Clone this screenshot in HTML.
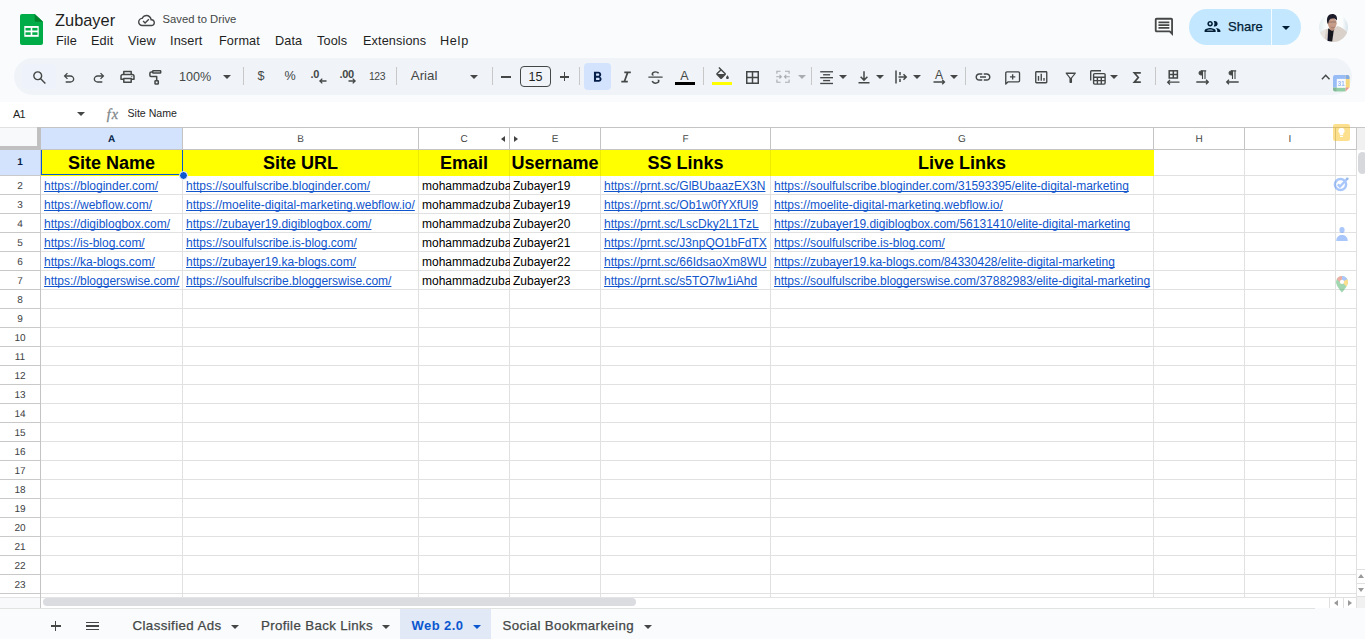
<!DOCTYPE html>
<html>
<head>
<meta charset="utf-8">
<title>Zubayer - Google Sheets</title>
<style>
*{box-sizing:border-box;margin:0;padding:0}
html,body{width:1365px;height:639px;overflow:hidden;background:#f9fbfd;font-family:"Liberation Sans",sans-serif;color:#1f1f1f}
.abs{position:absolute}
#app{position:relative;width:1365px;height:639px;overflow:hidden;background:#f9fbfd}
/* header */
#title{left:55px;top:10px;font-size:16.4px;line-height:20px;color:#1f1f1f;white-space:nowrap}
#saved{left:162.500px;top:12px;font-size:11.250px;line-height:14px;color:#444746;white-space:nowrap}
.menu{top:33px;letter-spacing:0.120px;font-size:12.7px;line-height:16px;color:#1f1f1f;white-space:nowrap}
/* toolbar */
#pill{left:14px;top:58px;width:1338px;height:37px;border-radius:18.500px;background:#f0f4f9}
#pillsearch{left:21.500px;top:64px;width:34.500px;height:24.500px;border-radius:4px;background:#eef2fa}
.tsep{top:67px;width:1px;height:18px;background:#c7c7c7}
.ttext{top:69px;font-size:12.6px;line-height:16px;color:#444746;white-space:nowrap}
svg{position:absolute;overflow:visible}
/* formula bar */
#fbar{left:0;top:102px;width:1365px;height:25px;background:#fff}
/* grid */
#grid{left:0;top:127px;width:1356px;height:470px;background:#fff;overflow:hidden}
.hl{position:absolute;left:0;height:1px;background:#e1e1e1;width:1356px}
.vl{position:absolute;top:0;width:1px;background:#e1e1e1;height:470px}
.ch span{display:inline-block;transform:none}
.ch{position:absolute;top:1px;height:21px;font-size:10px;text-rendering:geometricPrecision;line-height:23px;text-align:center;color:#444746;background:#fff}
.rh{position:absolute;left:0;width:40px;font-size:10px;text-rendering:geometricPrecision;text-align:center;color:#3c4043;background:#fff;line-height:21px;height:18px;overflow:hidden}
.cell{position:absolute;font-size:12px;line-height:20px;height:18px;white-space:nowrap;overflow:hidden;color:#000}
.lnk{color:#1155cc;text-decoration:underline;text-decoration-thickness:1px;text-underline-offset:1px;text-decoration-skip-ink:none}
.hd{position:absolute;top:23px;height:26px;background:#ffff00;font-weight:bold;font-size:18px;line-height:27px;text-align:center;color:#000;white-space:nowrap;overflow:hidden}
/* bottom */
#bottom{left:0;top:609px;width:1365px;height:30px;background:#f9fbfd}
.tab{top:610.800px;height:28px;font-size:12.8px;line-height:30px;color:#444746;white-space:nowrap}
</style>
</head>
<body>
<div id="app">

<!-- ===== HEADER ===== -->
<svg class="abs" style="left:19.500px;top:14px" width="23" height="31" viewBox="0 0 23 31">
  <path d="M2 0H14.700L23 7.800V29a2 2 0 0 1-2 2H2a2 2 0 0 1-2-2V2a2 2 0 0 1 2-2z" fill="#00ac47"/>
  <path d="M14.700 0L23 7.800H16.200a1.500 1.500 0 0 1-1.500-1.500z" fill="#00832d"/>
  <rect x="4.300" y="12" width="14.400" height="10.800" fill="#fff"/>
  <rect x="5.500" y="13.900" width="5.200" height="2.600" fill="#00ac47"/><rect x="12.300" y="13.900" width="5.200" height="2.600" fill="#00ac47"/>
  <rect x="5.500" y="18.300" width="5.200" height="2.600" fill="#00ac47"/><rect x="12.300" y="18.300" width="5.200" height="2.600" fill="#00ac47"/>
</svg>
<div id="title" class="abs">Zubayer</div>
<svg class="abs" style="left:138px;top:12px" width="17" height="17" viewBox="0 0 24 24"><path fill="#444746" d="M19.350 10.040C18.670 6.590 15.640 4 12 4 9.110 4 6.600 5.640 5.350 8.040 2.340 8.360 0 10.910 0 14c0 3.310 2.690 6 6 6h13c2.760 0 5-2.240 5-5 0-2.640-2.050-4.780-4.650-4.960zM19 18H6c-2.210 0-4-1.790-4-4 0-2.050 1.530-3.760 3.560-3.970l1.070-.11.500-.95C8.080 7.140 9.940 6 12 6c2.620 0 4.880 1.860 5.390 4.430l.3 1.500 1.530.11c1.560.1 2.780 1.410 2.780 2.960 0 1.650-1.350 3-3 3zm-9-3.820l-2.090-2.090L6.500 13.500 10 17l6.010-6.010-1.410-1.410z"/></svg>
<div id="saved" class="abs">Saved to Drive</div>

<div class="abs menu" style="left:56px">File</div>
<div class="abs menu" style="left:91px">Edit</div>
<div class="abs menu" style="left:128px">View</div>
<div class="abs menu" style="left:170px">Insert</div>
<div class="abs menu" style="left:219px">Format</div>
<div class="abs menu" style="left:275px">Data</div>
<div class="abs menu" style="left:317px">Tools</div>
<div class="abs menu" style="left:363px">Extensions</div>
<div class="abs menu" style="left:440px;letter-spacing:0.700px">Help</div>

<!-- TOOLBAR -->
<div id="pill" class="abs"></div>
<div id="pillsearch" class="abs"></div>
<!--TOOLBAR-ICONS-->
<svg style="left:30.700000000000003px;top:68.9px" width="17" height="17" viewBox="0 -960 960 960"><path fill="#444746" d="M784-120 532-372q-30 24-69 38t-83 14q-109 0-184.500-75.500T120-580q0-109 75.500-184.500T380-840q109 0 184.500 75.500T640-580q0 44-14 83t-38 69l252 252-56 56ZM380-400q75 0 127.500-52.500T560-580q0-75-52.500-127.500T380-760q-75 0-127.500 52.500T200-580q0 75 52.500 127.500T380-400Z"/></svg>
<svg style="left:60.8px;top:70.0px" width="16" height="16" viewBox="0 -960 960 960"><path fill="#444746" d="M280-200v-80h284q63 0 109.500-40T720-420q0-60-46.500-100T564-560H312l104 104-56 56-200-200 200-200 56 56-104 104h252q97 0 166.500 63T800-420q0 94-69.500 157T564-200H280Z"/></svg>
<svg style="left:90.6px;top:70.0px" width="16" height="16" viewBox="0 -960 960 960"><path fill="#444746" d="M396-200q-97 0-166.500-63T160-420q0-94 69.500-157T396-640h252L544-744l56-56 200 200-200 200-56-56 104-104H396q-63 0-109.500 40T240-420q0 60 46.500 100T396-280h284v80H396Z"/></svg>
<svg style="left:120px;top:70px" width="15" height="13" viewBox="0 0 15 13" fill="none" stroke="#444746" stroke-width="1.500" stroke-linejoin="round"><path d="M3.800 4.400V1.400h7.400v3"/><path d="M3.800 9.300H1V6.200a1.800 1.800 0 0 1 1.800-1.800h9.400a1.800 1.800 0 0 1 1.800 1.800v3.100h-2.800"/><rect x="3.800" y="8.600" width="7.400" height="3.600"/><circle cx="11.800" cy="6.500" r="0.350" fill="#444746" stroke-width="0.600"/></svg>
<svg style="left:148px;top:69px" width="15" height="17" viewBox="0 0 15 17" fill="none" stroke="#444746" stroke-width="1.500" stroke-linejoin="round"><rect x="4.700" y="1.700" width="8" height="2.400" rx="0.500"/><path d="M4.700 2.900H3.300a1.400 1.400 0 0 0-1.400 1.400v2.200a1 1 0 0 0 1 1h5.800v3.600"/><rect x="7" y="11.700" width="3.300" height="3.400" rx="0.600"/></svg>
<div class="abs ttext" style="left:179px;top:69px">100%</div>
<svg style="left:223px;top:75px" width="8" height="4" viewBox="0 0 8 4"><path d="M0 0h8L4 4z" fill="#444746"/></svg>
<div class="abs tsep" style="left:243px"></div>
<div class="abs ttext" style="left:257.500px;top:68.400px">$</div>
<div class="abs ttext" style="left:284.500px;top:68.400px">%</div>
<div class="abs ttext" style="left:310.500px;top:65.500px;font-size:11px;font-weight:bold;letter-spacing:-0.3px">.0</div>
<svg style="left:318.500px;top:77.700px" width="8" height="6" viewBox="0 0 8 6" fill="none" stroke="#444746" stroke-width="1.300"><path d="M7.500 3H1M3.300 0.600L0.900 3l2.400 2.400"/></svg>
<div class="abs ttext" style="left:339.500px;top:65.500px;font-size:11px;font-weight:bold;letter-spacing:-0.3px">.00</div>
<svg style="left:348px;top:77.700px" width="8" height="6" viewBox="0 0 8 6" fill="none" stroke="#444746" stroke-width="1.300"><path d="M0.500 3H7M4.700 0.600L7.100 3 4.700 5.400"/></svg>
<div class="abs ttext" style="left:368.900px;top:68.800px;font-size:10.400px;letter-spacing:-0.3px">123</div>
<div class="abs tsep" style="left:396px"></div>
<div class="abs ttext" style="left:410.800px;top:68.200px;font-size:13.300px">Arial</div>
<svg style="left:470px;top:75px" width="8" height="4" viewBox="0 0 8 4"><path d="M0 0h8L4 4z" fill="#444746"/></svg>
<div class="abs tsep" style="left:492px"></div>
<div class="abs" style="left:501px;top:76px;width:10px;height:1.500px;background:#444746"></div>
<div class="abs" style="left:520px;top:66px;width:31px;height:21px;border:1px solid #444746;border-radius:4px"></div>
<div class="abs ttext" style="left:520px;top:69px;width:31px;text-align:center;color:#1f1f1f">15</div>
<div class="abs" style="left:560px;top:76px;width:9px;height:1.500px;background:#444746"></div>
<div class="abs" style="left:563.700px;top:72.200px;width:1.500px;height:9px;background:#444746"></div>
<div class="abs tsep" style="left:579px"></div>
<div class="abs" style="left:584px;top:63px;width:27px;height:27px;border-radius:4px;background:#d3e3fd"></div>
<svg style="left:588.5px;top:68.7px" width="17" height="17" viewBox="0 0 24 24"><path fill="#041e49" d="M15.600 10.790c.97-.67 1.650-1.770 1.650-2.790 0-2.260-1.750-4-4-4H7v14h7.040c2.090 0 3.710-1.700 3.710-3.790 0-1.520-.860-2.820-2.150-3.420zM10 6.500h3c.83 0 1.500.67 1.500 1.500s-.67 1.500-1.500 1.500h-3v-3zm3.500 9H10v-3h3.500c.83 0 1.500.67 1.500 1.500s-.67 1.500-1.500 1.500z"/></svg>
<svg style="left:620px;top:71px" width="12" height="12" viewBox="0 0 12 12" fill="none" stroke="#444746" stroke-width="1.700"><path d="M4.300 1.400h6.500M1.300 10.700h6.500M7.700 1.400L4.300 10.700"/></svg>
<svg style="left:646px;top:68.700px" width="19" height="17" viewBox="0 0 24 24" preserveAspectRatio="none"><path fill="#444746" d="M3 12.500v-1.800h18v1.800zM7.600 9.200q-.3-.5-.45-1.050T7 7q0-1.750 1.400-2.880Q9.800 3 12 3q1.650 0 2.900.72 1.250.73 1.750 1.980l-1.900.85q-.3-.7-1.050-1.130Q12.950 5 12 5q-1.300 0-2.100.55Q9.100 6.100 9.100 7q0 .6.330 1.150.32.550.87 1.050zM12.050 21q-1.800 0-3.200-.97-1.400-.98-1.900-2.630l1.950-.75q.4 1.100 1.250 1.730.85.620 1.950.620 1.250 0 2.070-.6.830-.6.830-1.600 0-.5-.2-.95-.2-.45-.55-.85h2.450q.2.400.3.850.1.450.1.950 0 1.950-1.400 3.080Q14.300 21 12.050 21z"/></svg>
<div class="abs ttext" style="left:679.500px;top:67.600px;font-size:12.500px;width:10px;text-align:center">A</div>
<div class="abs" style="left:675px;top:82px;width:20px;height:3px;background:#000"></div>
<div class="abs tsep" style="left:703px"></div>
<svg style="left:714.0px;top:67.0px" width="17" height="17" viewBox="0 0 24 24"><path fill="#444746" d="M16.560 8.940L7.620 0 6.210 1.410l2.380 2.380-5.150 5.150c-.59.59-.59 1.540 0 2.120l5.500 5.500c.29.29.68.44 1.060.44s.77-.15 1.060-.44l5.500-5.500c.59-.58.59-1.530 0-2.120zM5.210 10L10 5.210 14.790 10H5.210zM19 11.500s-2 2.170-2 3.500c0 1.100.9 2 2 2s2-.9 2-2c0-1.330-2-3.500-2-3.500z"/></svg>
<div class="abs" style="left:712px;top:82px;width:20px;height:3px;background:#ffff00"></div>
<svg style="left:746px;top:71px" width="13" height="13" viewBox="0 0 13 13" fill="none" stroke="#444746" stroke-width="1.500"><rect x="0.750" y="0.750" width="11.500" height="11.500"/><path d="M6.500 0.750v11.500M0.750 6.500h11.500"/></svg>
<svg style="left:776px;top:70px" width="14" height="14" viewBox="0 0 14 14" fill="none" stroke="#a9adb1" stroke-width="1.150"><path d="M4.600 1.200H0.900V3.800M0.900 9.600V12.200H4.600M9 1.200H13.100V3.800M13.100 9.600V12.200H9M0.200 6.700H5.200M3.500 4.900L5.300 6.700 3.500 8.500M13.800 6.700H8.600M10.300 4.900L8.500 6.700l1.800 1.800"/></svg>
<svg style="left:798px;top:75px" width="8" height="4" viewBox="0 0 8 4"><path d="M0 0h8L4 4z" fill="#a9adb1"/></svg>
<div class="abs tsep" style="left:811px"></div>
<svg style="left:820px;top:71px" width="13" height="14" viewBox="0 0 13 14" fill="#444746"><rect x="0.200" y="0.100" width="12.800" height="1.350"/><rect x="3.100" y="3.100" width="7" height="1.350"/><rect x="0.200" y="6" width="12.800" height="1.350"/><rect x="3.100" y="8.900" width="7" height="1.350"/><rect x="0.200" y="11.800" width="12.800" height="1.350"/></svg>
<svg style="left:839px;top:75px" width="8" height="4" viewBox="0 0 8 4"><path d="M0 0h8L4 4z" fill="#444746"/></svg>
<svg style="left:858px;top:70px" width="12" height="14" viewBox="0 0 12 14" fill="none" stroke="#444746" stroke-width="1.500"><path d="M6 1.300v8.800M2.600 6.700l3.400 3.400 3.400-3.400M0.500 12.800h11"/></svg>
<svg style="left:876px;top:75px" width="8" height="4" viewBox="0 0 8 4"><path d="M0 0h8L4 4z" fill="#444746"/></svg>
<svg style="left:895px;top:70px" width="13" height="14" viewBox="0 0 13 14" fill="none" stroke="#444746" stroke-width="1.500"><path d="M1 0.500v13M5 2v3.200M5 8.800V12M3.500 7H11M8.500 4.300L11.200 7 8.500 9.700"/></svg>
<svg style="left:913px;top:75px" width="8" height="4" viewBox="0 0 8 4"><path d="M0 0h8L4 4z" fill="#444746"/></svg>
<div class="abs ttext" style="left:934px;top:66.500px;font-size:12px;width:10px;text-align:center">A</div>
<svg style="left:933px;top:78.700px" width="13" height="6" viewBox="0 0 13 6" fill="none" stroke="#444746" stroke-width="1.300"><path d="M0.500 3H11.500M9.200 0.700L11.500 3 9.200 5.300"/></svg>
<svg style="left:950px;top:75px" width="8" height="4" viewBox="0 0 8 4"><path d="M0 0h8L4 4z" fill="#444746"/></svg>
<div class="abs tsep" style="left:965px"></div>
<svg style="left:974.3px;top:68.3px" width="18" height="18" viewBox="0 0 24 24"><path fill="#444746" d="M3.900 12c0-1.710 1.390-3.100 3.100-3.100h4V7H7c-2.760 0-5 2.240-5 5s2.240 5 5 5h4v-1.900H7c-1.710 0-3.100-1.390-3.100-3.100zM8 13h8v-2H8v2zm9-6h-4v1.900h4c1.710 0 3.100 1.390 3.100 3.100s-1.390 3.100-3.100 3.100h-4V17h4c2.760 0 5-2.240 5-5s-2.240-5-5-5z"/></svg>
<svg style="left:1004.500px;top:70.500px" width="15.300" height="14.600" viewBox="0 0 16 15" fill="none" stroke="#444746" stroke-width="1.400" stroke-linejoin="round"><path d="M0.800 13.600V2a1.200 1.200 0 0 1 1.200-1.200h12a1.200 1.200 0 0 1 1.200 1.200v8a1.200 1.200 0 0 1-1.200 1.200H3.300z"/><path d="M8 3.200v5.600M5.200 6h5.600"/></svg>
<svg style="left:1032.75px;top:69.15px" width="16.5" height="16.5" viewBox="0 0 24 24"><path fill="#444746" d="M9 17H7v-7h2v7zm4 0h-2V7h2v10zm4 0h-2v-4h2v4zm2 2H5V5h14v14zm0-16H5c-1.100 0-2 .9-2 2v14c0 1.100.9 2 2 2h14c1.100 0 2-.9 2-2V5c0-1.100-.9-2-2-2z"/></svg>
<svg style="left:1062.95px;top:70.45px" width="15.5" height="15.5" viewBox="0 0 24 24"><path fill="#444746" d="M7 6h10l-5.010 6.300L7 6zm-2.750-.39C6.270 8.200 10 13 10 13v6c0 .55.45 1 1 1h2c.55 0 1-.45 1-1v-6s3.720-4.800 5.740-7.390c.51-.66.040-1.610-.79-1.610H5.040c-.83 0-1.300.95-.79 1.610z"/></svg>
<svg style="left:1090px;top:70px" width="16" height="15" viewBox="0 0 16 15" fill="none" stroke="#444746" stroke-width="1.400"><path d="M0.700 10.500V1.500a.8.800 0 0 1 .8-.8H11"/><rect x="3.600" y="3.600" width="11.500" height="10.500" rx="1"/><path d="M3.600 7.200h11.500M3.600 10.600h11.500M7.400 7.200v6.900M11.300 7.200v6.900"/></svg>
<svg style="left:1110px;top:75px" width="8" height="4" viewBox="0 0 8 4"><path d="M0 0h8L4 4z" fill="#444746"/></svg>
<svg style="left:1131.500px;top:71px" width="10" height="13" viewBox="0 0 10 13" fill="none" stroke="#444746" stroke-width="1.700" stroke-linejoin="miter"><path d="M8.800 1.800H2.300L6.300 6.500 2.300 11.200H8.800"/></svg>
<div class="abs tsep" style="left:1155px"></div>
<svg style="left:1167px;top:70px" width="13" height="15" viewBox="0 0 13 15" fill="none" stroke="#444746" stroke-width="1.300"><rect x="2.200" y="0.800" width="8.200" height="7.200" stroke-width="1.500"/><path d="M6.300 0.800v7.200M2.200 4.400h8.200" stroke-width="1.500"/><path d="M12.500 12.200H0.700M3 9.900L0.700 12.200 3 14.500"/></svg>
<svg style="left:1196px;top:70px" width="13" height="15" viewBox="0 0 13 15" fill="none" stroke="#444746" stroke-width="1.300"><path d="M6.500 0.900v8M9 0.900v8M10.200 0.900H5" stroke-width="1.100"/><path d="M5 0.900a2.100 2.100 0 0 0 0 4.200h1.500V0.900z" fill="#444746" stroke-width="0.800"/><path d="M0.300 12H12.300M10 9.700l2.300 2.300L10 14.300"/></svg>
<svg style="left:1225.500px;top:70px" width="13" height="15" viewBox="0 0 13 15" fill="none" stroke="#444746" stroke-width="1.300"><path d="M6.500 0.900v8M9 0.900v8M10.200 0.900H5" stroke-width="1.100"/><path d="M5 0.900a2.100 2.100 0 0 0 0 4.200h1.500V0.900z" fill="#444746" stroke-width="0.800"/><path d="M12.700 12H0.700M3 9.700L0.700 12 3 14.300"/></svg>
<svg style="left:1320.800px;top:74.200px" width="9.400" height="6.200" viewBox="0 0 10 7" fill="none" stroke="#444746" stroke-width="1.600"><path d="M0.700 6L5 1.500 9.300 6"/></svg>
<!--/TOOLBAR-ICONS-->

<!-- FORMULA BAR -->
<div id="fbar" class="abs"></div>
<!--FBAR-->
<div class="abs" style="left:13px;top:106px;font-size:11px;line-height:16px;color:#1f1f1f;letter-spacing:-0.900px">A1</div>
<svg style="left:77px;top:112px" width="8" height="4" viewBox="0 0 8 4"><path d="M0 0h8L4 4z" fill="#444746"/></svg>
<div class="abs" style="left:106.700px;top:104px;font-family:'Liberation Serif',serif;font-style:italic;font-size:14.200px;line-height:20px;color:#80868b;letter-spacing:1.100px;-webkit-text-stroke:0.300px #80868b">fx</div>
<div class="abs" style="left:127.500px;top:106px;font-size:10.600px;line-height:14px;color:#1f1f1f;white-space:nowrap">Site Name</div>
<svg style="left:1153px;top:16.300px" width="21.800" height="21.800" viewBox="0 0 24 24"><path fill="#444746" d="M21.990 4c0-1.100-.89-2-1.990-2H4c-1.100 0-2 .9-2 2v12c0 1.100.9 2 2 2h14l4 4-.01-18zM20 4v13.170L18.830 16H4V4h16zM6 12h12v2H6zm0-3h12v2H6zm0-3h12v2H6z"/></svg>
<div class="abs" style="left:1189px;top:9px;width:112px;height:36px;border-radius:18px;background:#c2e7ff"></div>
<div class="abs" style="left:1271px;top:9px;width:1px;height:36px;background:#f6fbff"></div>
<svg style="left:1203px;top:17px" width="19" height="19" viewBox="0 0 24 24"><path fill="#001d35" d="M9 13.750c-2.340 0-7 1.170-7 3.500V19h14v-1.750c0-2.330-4.660-3.500-7-3.500zM4.340 17c.84-.58 2.870-1.250 4.660-1.250s3.820.67 4.660 1.250H4.340zM9 12c1.930 0 3.500-1.570 3.500-3.500S10.930 5 9 5 5.500 6.570 5.500 8.500 7.070 12 9 12zm0-5c.83 0 1.500.67 1.500 1.500S9.830 10 9 10s-1.500-.67-1.500-1.500S8.170 7 9 7zm7.040 6.810c1.160.84 1.960 1.960 1.960 3.440V19h4v-1.750c0-2.020-3.500-3.170-5.960-3.440zM15 12c1.930 0 3.500-1.570 3.500-3.500S16.930 5 15 5c-.54 0-1.040.13-1.500.35.63.89 1 1.980 1 3.150s-.37 2.260-1 3.150c.46.22.96.350 1.500.350z"/></svg>
<div class="abs" style="left:1228px;top:18px;font-size:13px;line-height:18px;color:#001d35;white-space:nowrap;-webkit-text-stroke:0.25px #001d35">Share</div>
<svg style="left:1282px;top:25.500px" width="8" height="4" viewBox="0 0 8 4"><path d="M0 0h8L4 4z" fill="#001d35"/></svg>
<svg style="left:1319px;top:12.500px" width="29" height="29" viewBox="0 0 29 29"><defs><clipPath id="av"><circle cx="14.500" cy="14.500" r="14.400"/></clipPath><filter id="bl" x="-20%" y="-20%" width="140%" height="140%"><feGaussianBlur stdDeviation="0.550"/></filter><linearGradient id="avbg" x1="0" x2="1" y1="0" y2="0"><stop offset="0" stop-color="#e3edf0"/><stop offset="0.250" stop-color="#fbfdfd"/><stop offset="0.800" stop-color="#fbfdfd"/><stop offset="1" stop-color="#d5e2ea"/></linearGradient></defs><g clip-path="url(#av)"><rect width="29" height="29" fill="url(#avbg)"/><g filter="url(#bl)"><path d="M0 29V22c1.500-3 5-5.500 9.500-6.500l4 1.500 4.800-4c4 1 8.200 3.500 10.700 7.500V29z" fill="#dad1cb"/><path d="M0 29V22c1.500-3 4-5 7-6l-2 13z" fill="#e9e4e1"/><path d="M9.200 15.500l5.600 1.500-1.600 11.500h-4.300z" fill="#16161f"/><path d="M9.200 15.500l.7 12.500-1.400.2z" fill="#0d0d33"/><path d="M10.500 13h5v4l-2.500 1-2.500-1.500z" fill="#b98f7d"/><ellipse cx="13.200" cy="10.300" rx="4.500" ry="5.500" fill="#c79d8a"/><path d="M8.300 10c-1.300-5.800 1.400-9 4.900-9s5.600 2.700 4.600 6.600c-.9-1.700-2.200-2.300-4.500-2.100-2.400.2-3.400 1.500-3.800 4.300-.2 1.400-.8 1.200-1.200.2z" fill="#1e1e2b"/><path d="M9.800 9h7.200" stroke="#80665e" stroke-width="0.700" fill="none"/><path d="M10.800 13c1 1.900 2 2.400 3 2.400s2-.5 2.800-2.200c-.8.600-1.700.8-2.800.8s-2.200-.3-3-1z" fill="#ad8272"/></g></g></svg>
<!--/FBAR-->

<!-- GRID -->
<div id="grid" class="abs">
<!--GRID-->
<div class="hl" style="top:0px"></div>
<div class="hl" style="top:22px"></div>
<div class="hl" style="top:48px"></div>
<div class="hl" style="top:67px"></div>
<div class="hl" style="top:86px"></div>
<div class="hl" style="top:105px"></div>
<div class="hl" style="top:124px"></div>
<div class="hl" style="top:143px"></div>
<div class="hl" style="top:162px"></div>
<div class="hl" style="top:181px"></div>
<div class="hl" style="top:200px"></div>
<div class="hl" style="top:219px"></div>
<div class="hl" style="top:238px"></div>
<div class="hl" style="top:257px"></div>
<div class="hl" style="top:276px"></div>
<div class="hl" style="top:295px"></div>
<div class="hl" style="top:314px"></div>
<div class="hl" style="top:333px"></div>
<div class="hl" style="top:352px"></div>
<div class="hl" style="top:371px"></div>
<div class="hl" style="top:390px"></div>
<div class="hl" style="top:409px"></div>
<div class="hl" style="top:428px"></div>
<div class="hl" style="top:447px"></div>
<div class="hl" style="top:466px"></div>
<div class="vl" style="left:182px"></div>
<div class="vl" style="left:418px"></div>
<div class="vl" style="left:509px"></div>
<div class="vl" style="left:600px"></div>
<div class="vl" style="left:770px"></div>
<div class="vl" style="left:1153px"></div>
<div class="vl" style="left:1244px"></div>
<div class="vl" style="left:1335px"></div>
<div class="ch" style="left:41px;width:141px;background:#d3e3fd;color:#041e49;font-weight:bold;"><span>A</span></div>
<div class="ch" style="left:183px;width:235px;"><span>B</span></div>
<div class="ch" style="left:419px;width:90px;"><span>C</span></div>
<div class="ch" style="left:510px;width:90px;"><span>E</span></div>
<div class="ch" style="left:601px;width:169px;"><span>F</span></div>
<div class="ch" style="left:771px;width:382px;"><span>G</span></div>
<div class="ch" style="left:1154px;width:90px;"><span>H</span></div>
<div class="ch" style="left:1245px;width:90px;"><span>I</span></div>
<div class="abs" style="left:0;top:1px;width:37px;height:18px;background:#f8f9fa"></div>
<div class="abs" style="left:37px;top:0px;width:4px;height:23px;background:#c0c0c0"></div>
<div class="abs" style="left:0px;top:19px;width:41px;height:4px;background:#c0c0c0"></div>
<div class="abs" style="left:40px;top:23px;width:1px;height:447px;background:#c4c4c4"></div>
<div class="abs" style="left:41px;top:0;width:1315px;height:1px;background:#c4c4c4"></div>
<div class="abs" style="left:41px;top:22px;width:1315px;height:1px;background:#c4c4c4"></div>
<div class="abs" style="left:182px;top:0;width:1px;height:23px;background:#c4c4c4"></div>
<div class="abs" style="left:418px;top:0;width:1px;height:23px;background:#c4c4c4"></div>
<div class="abs" style="left:509px;top:0;width:1px;height:23px;background:#c4c4c4"></div>
<div class="abs" style="left:600px;top:0;width:1px;height:23px;background:#c4c4c4"></div>
<div class="abs" style="left:770px;top:0;width:1px;height:23px;background:#c4c4c4"></div>
<div class="abs" style="left:1153px;top:0;width:1px;height:23px;background:#c4c4c4"></div>
<div class="abs" style="left:1244px;top:0;width:1px;height:23px;background:#c4c4c4"></div>
<div class="abs" style="left:1335px;top:0;width:1px;height:23px;background:#c4c4c4"></div>
<svg style="left:501px;top:9px" width="4" height="6" viewBox="0 0 4 6"><path d="M4 0v6L0 3z" fill="#444"/></svg>
<svg style="left:514px;top:9px" width="4" height="6" viewBox="0 0 4 6"><path d="M0 0v6l4-3z" fill="#444"/></svg>
<div class="rh" style="top:23px;height:25px;line-height:25px;background:#d3e3fd;color:#041e49;font-weight:bold">1</div>
<div class="rh" style="top:49px">2</div>
<div class="rh" style="top:68px">3</div>
<div class="rh" style="top:87px">4</div>
<div class="rh" style="top:106px">5</div>
<div class="rh" style="top:125px">6</div>
<div class="rh" style="top:144px">7</div>
<div class="rh" style="top:163px">8</div>
<div class="rh" style="top:182px">9</div>
<div class="rh" style="top:201px">10</div>
<div class="rh" style="top:220px">11</div>
<div class="rh" style="top:239px">12</div>
<div class="rh" style="top:258px">13</div>
<div class="rh" style="top:277px">14</div>
<div class="rh" style="top:296px">15</div>
<div class="rh" style="top:315px">16</div>
<div class="rh" style="top:334px">17</div>
<div class="rh" style="top:353px">18</div>
<div class="rh" style="top:372px">19</div>
<div class="rh" style="top:391px">20</div>
<div class="rh" style="top:410px">21</div>
<div class="rh" style="top:429px">22</div>
<div class="rh" style="top:448px">23</div>
<div class="rh" style="top:467px">24</div>
<div class="abs" style="left:0;top:48px;width:40px;height:1px;background:#c9c9c9"></div>
<div class="abs" style="left:0;top:67px;width:40px;height:1px;background:#c9c9c9"></div>
<div class="abs" style="left:0;top:86px;width:40px;height:1px;background:#c9c9c9"></div>
<div class="abs" style="left:0;top:105px;width:40px;height:1px;background:#c9c9c9"></div>
<div class="abs" style="left:0;top:124px;width:40px;height:1px;background:#c9c9c9"></div>
<div class="abs" style="left:0;top:143px;width:40px;height:1px;background:#c9c9c9"></div>
<div class="abs" style="left:0;top:162px;width:40px;height:1px;background:#c9c9c9"></div>
<div class="abs" style="left:0;top:181px;width:40px;height:1px;background:#c9c9c9"></div>
<div class="abs" style="left:0;top:200px;width:40px;height:1px;background:#c9c9c9"></div>
<div class="abs" style="left:0;top:219px;width:40px;height:1px;background:#c9c9c9"></div>
<div class="abs" style="left:0;top:238px;width:40px;height:1px;background:#c9c9c9"></div>
<div class="abs" style="left:0;top:257px;width:40px;height:1px;background:#c9c9c9"></div>
<div class="abs" style="left:0;top:276px;width:40px;height:1px;background:#c9c9c9"></div>
<div class="abs" style="left:0;top:295px;width:40px;height:1px;background:#c9c9c9"></div>
<div class="abs" style="left:0;top:314px;width:40px;height:1px;background:#c9c9c9"></div>
<div class="abs" style="left:0;top:333px;width:40px;height:1px;background:#c9c9c9"></div>
<div class="abs" style="left:0;top:352px;width:40px;height:1px;background:#c9c9c9"></div>
<div class="abs" style="left:0;top:371px;width:40px;height:1px;background:#c9c9c9"></div>
<div class="abs" style="left:0;top:390px;width:40px;height:1px;background:#c9c9c9"></div>
<div class="abs" style="left:0;top:409px;width:40px;height:1px;background:#c9c9c9"></div>
<div class="abs" style="left:0;top:428px;width:40px;height:1px;background:#c9c9c9"></div>
<div class="abs" style="left:0;top:447px;width:40px;height:1px;background:#c9c9c9"></div>
<div class="abs" style="left:0;top:466px;width:40px;height:1px;background:#c9c9c9"></div>
<div class="hd" style="left:41px;width:142px"><div style="width:141px">Site Name</div></div>
<div class="hd" style="left:183px;width:236px"><div style="width:235px">Site URL</div></div>
<div class="hd" style="left:419px;width:91px"><div style="width:90px">Email</div></div>
<div class="hd" style="left:510px;width:91px"><div style="width:90px">Username</div></div>
<div class="hd" style="left:601px;width:170px"><div style="width:169px">SS Links</div></div>
<div class="hd" style="left:771px;width:383px"><div style="width:382px">Live Links</div></div>
<div class="abs" style="left:418px;top:23px;width:1px;height:26px;background:#ecec00"></div>
<div class="abs" style="left:509px;top:23px;width:1px;height:26px;background:#ecec00"></div>
<div class="abs" style="left:600px;top:23px;width:1px;height:26px;background:#ecec00"></div>
<div class="abs" style="left:770px;top:23px;width:1px;height:26px;background:#ecec00"></div>
<div class="cell" style="left:44px;top:49px;width:138px"><span class="lnk">https://bloginder.com/</span></div>
<div class="cell" style="left:186px;top:49px;width:232px"><span class="lnk">https://soulfulscribe.bloginder.com/</span></div>
<div class="cell" style="left:422px;top:49px;width:88px">mohammadzubayer@gmail.com</div>
<div class="cell" style="left:513px;top:49px;width:87px">Zubayer19</div>
<div class="cell" style="left:604px;top:49px;width:166px"><span class="lnk">https://prnt.sc/GlBUbaazEX3N</span></div>
<div class="cell" style="left:774px;top:49px;width:379px"><span class="lnk">https://soulfulscribe.bloginder.com/31593395/elite-digital-marketing</span></div>
<div class="cell" style="left:44px;top:68px;width:138px"><span class="lnk">https://webflow.com/</span></div>
<div class="cell" style="left:186px;top:68px;width:232px"><span class="lnk">https://moelite-digital-marketing.webflow.io/</span></div>
<div class="cell" style="left:422px;top:68px;width:88px">mohammadzubayer@gmail.com</div>
<div class="cell" style="left:513px;top:68px;width:87px">Zubayer19</div>
<div class="cell" style="left:604px;top:68px;width:166px"><span class="lnk">https://prnt.sc/Ob1w0fYXfUl9</span></div>
<div class="cell" style="left:774px;top:68px;width:379px"><span class="lnk">https://moelite-digital-marketing.webflow.io/</span></div>
<div class="cell" style="left:44px;top:87px;width:138px"><span class="lnk">https://digiblogbox.com/</span></div>
<div class="cell" style="left:186px;top:87px;width:232px"><span class="lnk">https://zubayer19.digiblogbox.com/</span></div>
<div class="cell" style="left:422px;top:87px;width:88px">mohammadzubayer@gmail.com</div>
<div class="cell" style="left:513px;top:87px;width:87px">Zubayer20</div>
<div class="cell" style="left:604px;top:87px;width:166px"><span class="lnk">https://prnt.sc/LscDky2L1TzL</span></div>
<div class="cell" style="left:774px;top:87px;width:379px"><span class="lnk">https://zubayer19.digiblogbox.com/56131410/elite-digital-marketing</span></div>
<div class="cell" style="left:44px;top:106px;width:138px"><span class="lnk">https://is-blog.com/</span></div>
<div class="cell" style="left:186px;top:106px;width:232px"><span class="lnk">https://soulfulscribe.is-blog.com/</span></div>
<div class="cell" style="left:422px;top:106px;width:88px">mohammadzubayer@gmail.com</div>
<div class="cell" style="left:513px;top:106px;width:87px">Zubayer21</div>
<div class="cell" style="left:604px;top:106px;width:166px"><span class="lnk">https://prnt.sc/J3npQO1bFdTX</span></div>
<div class="cell" style="left:774px;top:106px;width:379px"><span class="lnk">https://soulfulscribe.is-blog.com/</span></div>
<div class="cell" style="left:44px;top:125px;width:138px"><span class="lnk">https://ka-blogs.com/</span></div>
<div class="cell" style="left:186px;top:125px;width:232px"><span class="lnk">https://zubayer19.ka-blogs.com/</span></div>
<div class="cell" style="left:422px;top:125px;width:88px">mohammadzubayer@gmail.com</div>
<div class="cell" style="left:513px;top:125px;width:87px">Zubayer22</div>
<div class="cell" style="left:604px;top:125px;width:166px"><span class="lnk">https://prnt.sc/66IdsaoXm8WU</span></div>
<div class="cell" style="left:774px;top:125px;width:379px"><span class="lnk">https://zubayer19.ka-blogs.com/84330428/elite-digital-marketing</span></div>
<div class="cell" style="left:44px;top:144px;width:138px"><span class="lnk">https://bloggerswise.com/</span></div>
<div class="cell" style="left:186px;top:144px;width:232px"><span class="lnk">https://soulfulscribe.bloggerswise.com/</span></div>
<div class="cell" style="left:422px;top:144px;width:88px">mohammadzubayer@gmail.com</div>
<div class="cell" style="left:513px;top:144px;width:87px">Zubayer23</div>
<div class="cell" style="left:604px;top:144px;width:166px"><span class="lnk">https://prnt.sc/s5TO7lw1iAhd</span></div>
<div class="cell" style="left:774px;top:144px;width:379px"><span class="lnk">https://soulfulscribe.bloggerswise.com/37882983/elite-digital-marketing</span></div>
<div class="abs" style="left:41px;top:23px;width:142px;height:25px;border:1px solid #0b57d0;border-top:0"></div>
<div class="abs" style="left:178.500px;top:43.500px;width:9.500px;height:9.500px;border-radius:50%;background:#0b57d0;border:1px solid #fff"></div>
<!--/GRID-->
</div>

<!-- BOTTOM -->
<div id="bottom" class="abs"></div>
<!--BOTTOM-->
<div class="abs" style="left:0;top:597px;width:1357px;height:11px;background:#fff"></div>
<div class="abs" style="left:0;top:597px;width:40px;height:11px;background:#f8f9fa"></div>
<div class="abs" style="left:0;top:597px;width:1357px;height:1px;background:#e4e4e4"></div>
<div class="abs" style="left:40px;top:597px;width:1px;height:11px;background:#c7c7c7"></div>
<div class="abs" style="left:43px;top:598px;width:593px;height:8px;border-radius:4px;background:#dadce0"></div>
<div class="abs" style="left:1329px;top:597px;width:28px;height:11px;background:#fff;border-left:1px solid #e0e0e0;border-top:1px solid #e0e0e0"></div>
<div class="abs" style="left:1343px;top:597px;width:1px;height:11px;background:#e0e0e0"></div>
<svg style="left:1334px;top:600px" width="4" height="6" viewBox="0 0 4 6"><path d="M4 0v6L0 3z" fill="#9a9a9a"/></svg>
<svg style="left:1348px;top:600px" width="4" height="6" viewBox="0 0 4 6"><path d="M0 0v6l4-3z" fill="#9a9a9a"/></svg>
<div class="abs" style="left:1356px;top:127px;width:9px;height:481px;background:#fff;border-left:1px solid #e0e0e0"></div>
<div class="abs" style="left:1356px;top:127px;width:9px;height:23px;background:#f1f1f1;border-left:1px solid #c7c7c7;border-top:1px solid #c7c7c7"></div>
<div class="abs" style="left:1357.500px;top:151.500px;width:9px;height:22px;border-radius:4.500px;background:#d6d8dc"></div>
<div class="abs" style="left:1356px;top:569px;width:9px;height:28px;background:#fff;border:1px solid #e0e0e0;border-right:0"></div>
<div class="abs" style="left:1356px;top:583px;width:9px;height:1px;background:#e0e0e0"></div>
<svg style="left:1358px;top:574px" width="6" height="4" viewBox="0 0 6 4"><path d="M0 4h6L3 0z" fill="#9a9a9a"/></svg>
<svg style="left:1358px;top:588px" width="6" height="4" viewBox="0 0 6 4"><path d="M0 0h6L3 4z" fill="#9a9a9a"/></svg>
<div class="abs" style="left:1357px;top:597px;width:8px;height:11px;background:#f1f1f1"></div>
<div class="abs" style="left:0;top:608px;width:1315px;height:1px;background:#e1e3e1"></div>
<div class="abs" style="left:50.500px;top:625.300px;width:10px;height:1.500px;background:#444746"></div>
<div class="abs" style="left:54.700px;top:621px;width:1.500px;height:10px;background:#444746"></div>
<div class="abs" style="left:85.500px;top:621.5px;width:13px;height:1.500px;background:#444746"></div>
<div class="abs" style="left:85.500px;top:625.2px;width:13px;height:1.500px;background:#444746"></div>
<div class="abs" style="left:85.500px;top:628.9px;width:13px;height:1.500px;background:#444746"></div>
<div class="abs tab" style="left:132.500px;-webkit-text-stroke:0.250px #444746;letter-spacing:0.400px;font-size:13.300px">Classified Ads</div>
<svg style="left:230.5px;top:624.5px" width="8" height="4" viewBox="0 0 8 4"><path d="M0 0h8L4 4z" fill="#444746"/></svg>
<div class="abs tab" style="left:261px;-webkit-text-stroke:0.250px #444746;letter-spacing:0.350px;font-size:13.300px">Profile Back Links</div>
<svg style="left:381.8px;top:624.5px" width="8" height="4" viewBox="0 0 8 4"><path d="M0 0h8L4 4z" fill="#444746"/></svg>
<div class="abs" style="left:400px;top:609px;width:91px;height:30px;background:#e1e9f7"></div>
<div class="abs tab" style="left:411.500px;color:#0b57d0;font-weight:bold;font-size:13px;letter-spacing:0.450px">Web 2.0</div>
<svg style="left:473px;top:624.5px" width="8" height="4" viewBox="0 0 8 4"><path d="M0 0h8L4 4z" fill="#0b57d0"/></svg>
<div class="abs tab" style="left:502.500px;-webkit-text-stroke:0.250px #444746;letter-spacing:0.340px;font-size:13.300px">Social Bookmarkeing</div>
<svg style="left:643.8px;top:624.5px" width="8" height="4" viewBox="0 0 8 4"><path d="M0 0h8L4 4z" fill="#444746"/></svg>
<svg style="left:1332.500px;top:74.500px;opacity:.5" width="16.500" height="16.500" viewBox="0 0 17 17"><rect x="0" y="0" width="17" height="17" rx="2" fill="#fff"/><path d="M0 2a2 2 0 0 1 2-2h11v4H4v9H0z" fill="#4285f4"/><path d="M13 0h2a2 2 0 0 1 2 2v11h-4V4z" fill="#fbbc04"/><path d="M13 4h4v9h-4z" fill="#fbbc04"/><path d="M4 13h9v4H4z" fill="#34a853"/><path d="M0 13h4v4H2a2 2 0 0 1-2-2z" fill="#188038"/><path d="M13 13h4l-4 4z" fill="#ea4335"/><path d="M13 0h2a2 2 0 0 1 2 2v2h-4z" fill="#1967d2"/><rect x="4" y="4" width="9" height="9" fill="#fff"/><text x="8.500" y="11.300" font-size="6.500" font-family="Liberation Sans" font-weight="bold" text-anchor="middle" fill="#4285f4">31</text></svg>
<svg style="left:1332.500px;top:124.200px;opacity:.45" width="17" height="17" viewBox="0 0 16 16"><rect width="16" height="16" rx="2" fill="#fbbc04"/><path d="M8 3.500a3 3 0 0 0-1.600 5.500v1.500h3.200V9A3 3 0 0 0 8 3.500zM6.600 11.300h2.800v1H6.600z" fill="#fff"/></svg>
<svg style="left:1333.200px;top:175.500px;opacity:.45" width="16" height="16" viewBox="0 0 16 16" fill="none"><circle cx="7.500" cy="8.500" r="5.600" stroke="#4285f4" stroke-width="2.500"/><path d="M4.800 8.300l2.200 2.200L14.500 2.500" stroke="#4285f4" stroke-width="2.500"/><circle cx="14.300" cy="2.800" r="1.300" fill="#1967d2"/></svg>
<svg style="left:1334.500px;top:225.500px;opacity:.45" width="14" height="16" preserveAspectRatio="none" viewBox="0 0 16 16"><circle cx="8" cy="4" r="3" fill="#4285f4"/><path d="M1.500 14.500c0-3.500 3-5.500 6.500-5.500s6.500 2 6.500 5.500v.5h-13z" fill="#4285f4"/></svg>
<svg style="left:1335.800px;top:275.500px;opacity:.45" width="12" height="16.500" viewBox="0 0 13 18"><path d="M6.500 0A6.500 6.500 0 0 0 0 6.500C0 11 6.500 18 6.500 18S13 11 13 6.500A6.500 6.500 0 0 0 6.500 0z" fill="#34a853"/><path d="M6.500 0A6.500 6.500 0 0 0 .8 3.400L6.500 9z" fill="#ea4335" opacity=".9"/><path d="M6.500 0c2.500 0 4.700 1.400 5.800 3.500L6.500 9z" fill="#4285f4"/><path d="M12.300 3.500c.5.900.7 1.900.7 3 0 1.500-.7 3.200-1.700 4.900L6.500 6.500z" fill="#fbbc04"/><circle cx="6.500" cy="6.500" r="2.300" fill="#fff"/></svg>
<!--/BOTTOM-->

</div>
</body>
</html>
